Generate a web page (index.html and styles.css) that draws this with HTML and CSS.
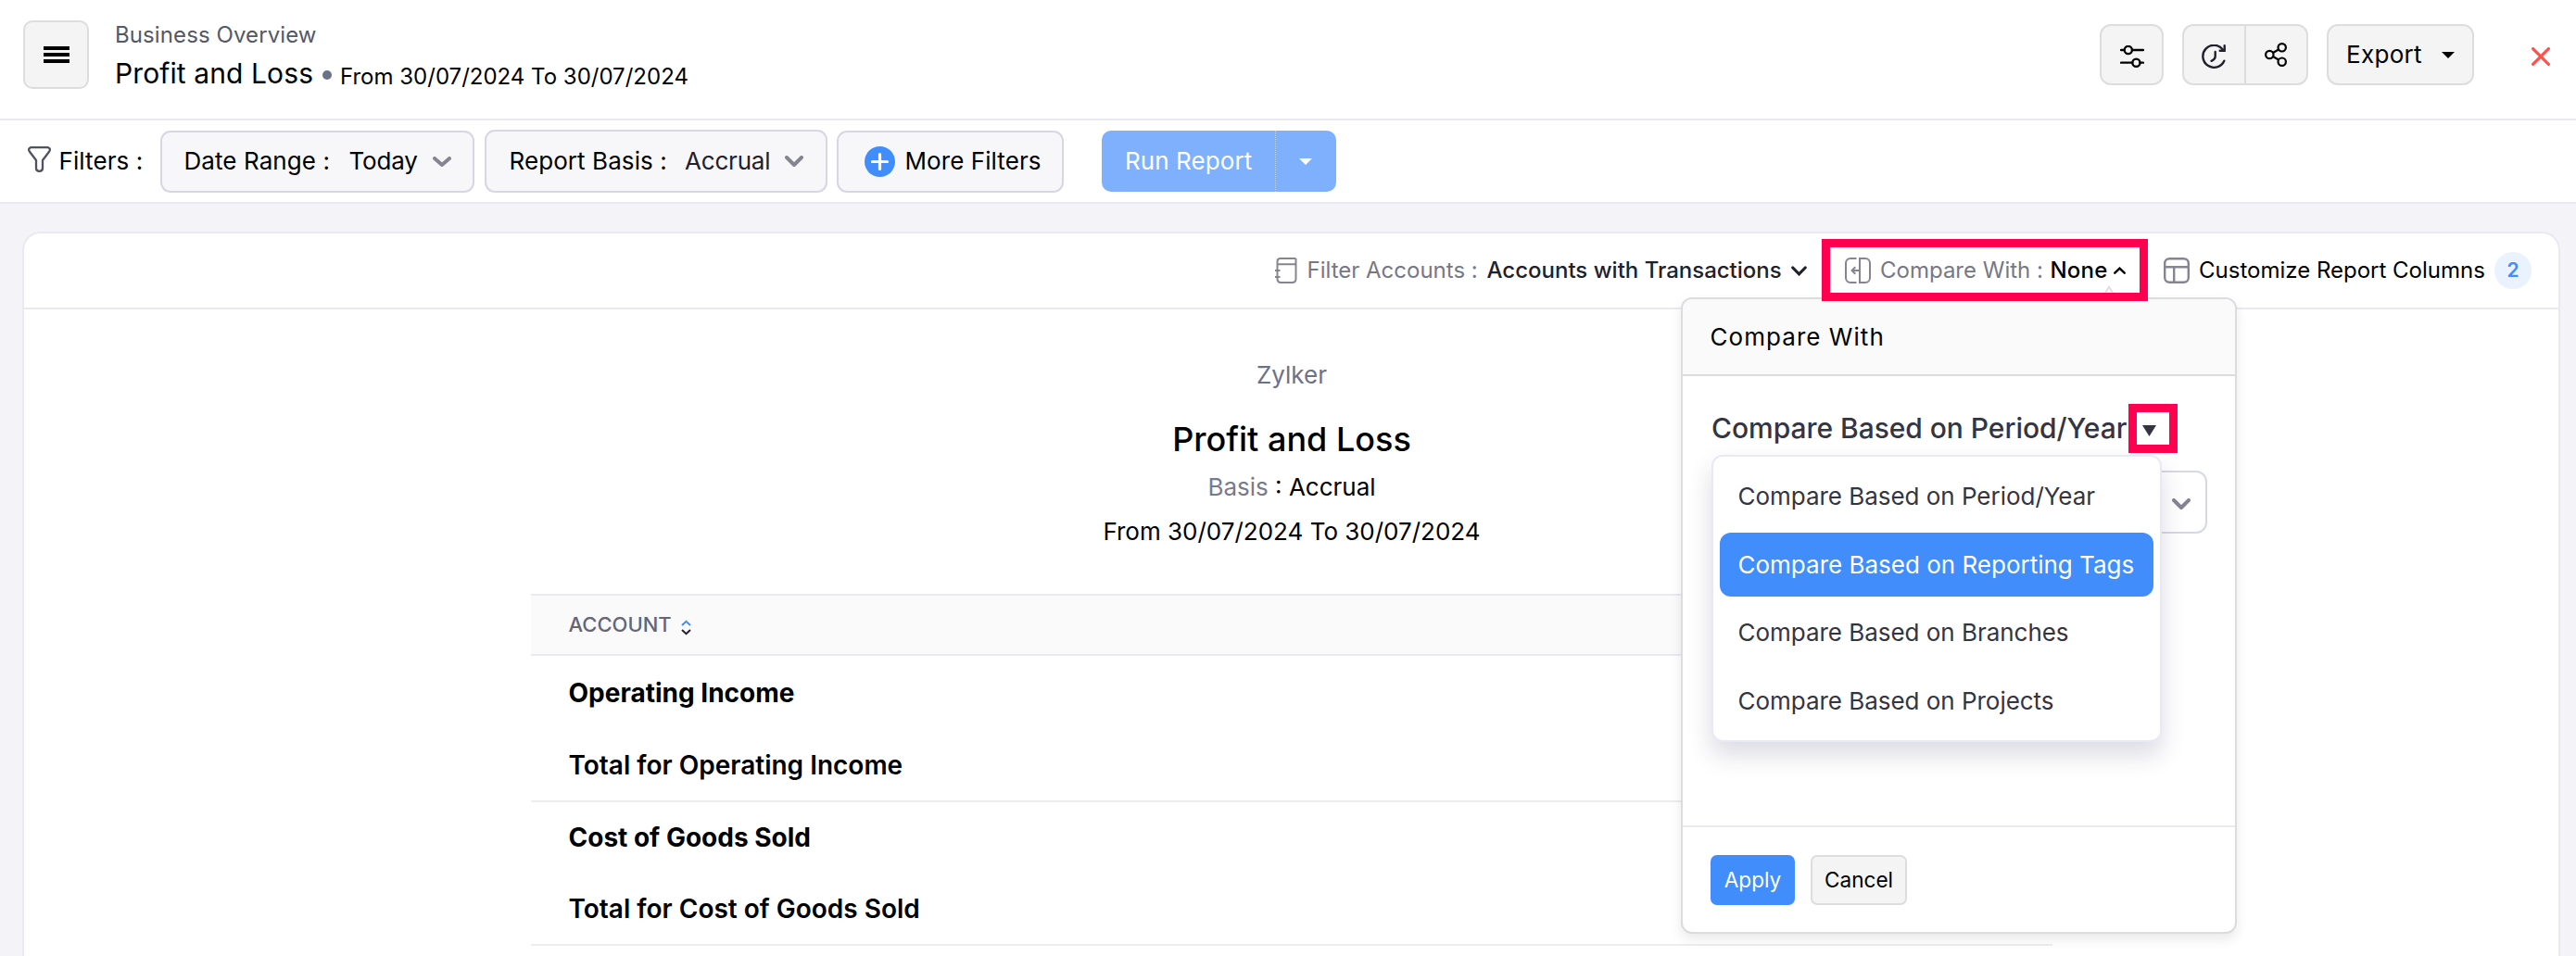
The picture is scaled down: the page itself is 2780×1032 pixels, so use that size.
FILE: index.html
```html
<!DOCTYPE html>
<html lang="en">
<head>
<meta charset="utf-8">
<title>Profit and Loss</title>
<link rel="stylesheet" href="styles.css">
</head>
<body>
<header class="topbar">
  <button class="btn menu-btn" aria-label="Menu">
    <svg width="28" height="18" viewBox="0 0 28 18"><path d="M0 2h28M0 9h28M0 16h28" stroke="#000" stroke-width="3.800" fill="none"/></svg>
  </button>
  <div class="heading">
    <div class="crumb">Business Overview</div>
    <div class="heading-row">
      <h1>Profit and Loss</h1><span class="dot"></span><span class="range">From 30/07/2024 To 30/07/2024</span>
    </div>
  </div>
  <div class="actions">
    <button class="btn icon-btn" aria-label="Settings">
      <svg width="26" height="24" viewBox="0 0 26 24" fill="none" stroke="#000" stroke-width="2.3" stroke-linecap="round"><path d="M1 5h3.7M13 5h12M1 18.7h12.3M21.5 18.7H25"/><circle cx="8.8" cy="5" r="4.1"/><circle cx="17.4" cy="18.7" r="4.1"/></svg>
    </button>
    <div class="btn btn-pair">
      <button class="pair-btn" aria-label="Schedule">
        <svg width="26" height="26" viewBox="0 0 26 26" fill="none" stroke="#20212d" stroke-width="2.4" stroke-linecap="round"><path d="M24.3 17.7A12 12 0 1 1 22.8 5.4"/><path d="M24.7 1.2v5.6h-5"/><path d="M14.7 8v4.6q0 3.6-4.2 5.2"/></svg>
      </button>
      <button class="pair-btn" aria-label="Share">
        <svg width="24" height="26" viewBox="0 0 24 26" fill="none" stroke="#000" stroke-width="2.2"><circle cx="5.3" cy="13" r="4.2"/><circle cx="18.7" cy="5.3" r="4.2"/><circle cx="18.7" cy="20.7" r="4.2"/><path d="M9 11l6-3.5M9 15l6 3.5"/></svg>
      </button>
    </div>
    <button class="btn export-btn">Export
      <svg width="14" height="7" viewBox="0 0 14 7"><path d="M0 0h14L7 7z"/></svg>
    </button>
    <svg class="close" width="20" height="20" viewBox="0 0 20 20"><path d="M1.6 1.6l16.8 16.8M18.4 1.6L1.6 18.4" stroke="#ff504c" stroke-width="3.200" stroke-linecap="round"/></svg>
  </div>
</header>

<section class="filters">
  <svg class="funnel" width="25" height="28" viewBox="0 0 25 28" fill="none" stroke="#50535f" stroke-width="2.300" stroke-linejoin="round"><path d="M3 1.200h19q3 1.300 1.200 4.300L16 15v8.500q0 3.300-3.500 3.300T9 23.500V15L1.800 5.500Q0 2.500 3 1.200z"/></svg>
  <span class="filters-label">Filters :</span>
  <div class="select date-range">
    <span class="label">Date Range :</span><span class="value">Today</span>
    <svg width="20" height="11" viewBox="0 0 20 11"><path d="M2 2l8 7 8-7" class="chev"/></svg>
  </div>
  <div class="select basis">
    <span class="label">Report Basis :</span><span class="value">Accrual</span>
    <svg width="20" height="12" viewBox="0 0 20 12"><path d="M2 2l8 8 8-8" class="chev"/></svg>
  </div>
  <div class="select more">
    <svg width="33" height="33" viewBox="0 0 33 33"><circle cx="16.500" cy="16.500" r="16.500" fill="#408dfb"/><path d="M16.500 8.500v16M8.500 16.500h16" stroke="#fff" stroke-width="3.200" stroke-linecap="round"/></svg>
    <span>More Filters</span>
  </div>
  <div class="run">
    <span class="run-main">Run Report</span>
    <span class="run-caret"><svg width="14" height="7" viewBox="0 0 14 7"><path d="M0 0h14L7 7z" fill="#fff"/></svg></span>
  </div>
</section>

<main class="card">
  <div class="toolbar">
    <div class="tool tool-accounts">
      <svg width="24" height="28" viewBox="0 0 24 28" fill="none" stroke="#858592" stroke-width="2"><path d="M22.500 1H6Q2.500 1 2.500 4v19q0 4 4 4h12q4 0 4-4V1M2.500 7.300h20M0 14h5.500M0 21h5.500"/></svg>
      <span class="muted">Filter Accounts :</span><strong>Accounts with Transactions</strong>
      <svg width="17" height="11" viewBox="0 0 17 11"><path d="M1.800 2l6.700 6.800L15.200 2" fill="none" stroke="#20212d" stroke-width="3.200" stroke-linecap="round"/></svg>
    </div>
    <div class="tool tool-compare">
      <svg width="28" height="28" viewBox="0 0 28 28" fill="none" stroke="#858592" stroke-width="2"><path d="M12.500 1H6a5 5 0 0 0-5 5v16a5 5 0 0 0 5 5h6.500M16 1h6a5 5 0 0 1 5 5v16a5 5 0 0 1-5 5h-6zM16 14H8M11.300 10.300L7.600 14l3.700 3.700"/></svg>
      <span class="muted">Compare With :</span><strong>None</strong>
      <svg width="13" height="8" viewBox="0 0 13 8"><path d="M1.300 6.700l5.200-5 5.200 5" fill="none" stroke="#000" stroke-width="2.400" stroke-linecap="round"/></svg>
    </div>
    <div class="tool tool-columns">
      <svg width="28" height="28" viewBox="0 0 28 28" fill="none" stroke="#858592" stroke-width="2.400"><rect x="1.200" y="1.200" width="25.600" height="25.600" rx="5"/><path d="M1 10.300h26M11.200 10.300V27"/></svg>
      <span>Customize Report Columns</span>
      <span class="badge">2</span>
    </div>
  </div>

  <div class="report">
    <div class="org">Zylker</div>
    <h2>Profit and Loss</h2>
    <div class="line"><span class="muted">Basis</span> : Accrual</div>
    <div class="line period">From 30/07/2024 To 30/07/2024</div>
    <div class="table">
      <div class="thead">ACCOUNT
        <svg width="11" height="17" viewBox="0 0 11 17" fill="none" stroke-width="2"><path d="M1 6l4.500-4.200L10 6" stroke="#408dfb"/><path d="M1 11l4.500 4.200L10 11" stroke="#20212d"/></svg>
      </div>
      <div class="group first">
        <div class="row group-name">Operating Income</div>
        <div class="row group-total">Total for Operating Income</div>
      </div>
      <div class="group">
        <div class="row group-name">Cost of Goods Sold</div>
        <div class="row group-total">Total for Cost of Goods Sold</div>
      </div>
    </div>
  </div>

  <svg class="pointer" width="16" height="13" viewBox="0 0 16 13"><path d="M1 13L8 1.500 15 13" fill="#fafafa" stroke="#dcdcdf" stroke-width="1.500"/></svg>
  <div class="popover">
    <div class="pop-head">Compare With</div>
    <div class="pop-body">
      <div class="pop-title">Compare Based on Period/Year
        <svg width="15" height="12" viewBox="0 0 15 12"><path d="M0 0h15L7.500 12z" fill="#333543"/></svg>
      </div>
      <div class="period-select"><svg width="20" height="12" viewBox="0 0 20 12"><path d="M2 2l8 8 8-8" class="chev"/></svg></div>
      <div class="options">
        <div class="option">Compare Based on Period/Year</div>
        <div class="option active">Compare Based on Reporting Tags</div>
        <div class="option">Compare Based on Branches</div>
        <div class="option">Compare Based on Projects</div>
      </div>
    </div>
    <div class="pop-foot">
      <button class="apply">Apply</button>
      <button class="cancel">Cancel</button>
    </div>
  </div>
  <div class="mark mark-compare"></div>
  <div class="mark mark-caret"></div>
</main>
</body>
</html>
```
FILE: styles.css
```css
* { box-sizing: border-box; }

body {
  margin: 0;
  height: 1032px;
  overflow: hidden;
  display: flex;
  flex-direction: column;
  background: #f3f3f8;
  color: #000;
  font: 26px/1.4 Inter, "Liberation Sans", sans-serif;
}

button { font: inherit; color: inherit; margin: 0; padding: 0; }
svg { display: block; flex: none; }
span, strong, div, h1, h2 { white-space: nowrap; }
.chev { fill: none; stroke: #858592; stroke-width: 4; stroke-linecap: round; stroke-linejoin: round; }
.muted { color: #6c718a; }

/* Top bar */
.topbar {
  flex: none;
  height: 130px;
  display: flex;
  align-items: flex-start;
  padding: 0 28px 0 25px;
  background: #fff;
  border-bottom: 2px solid #e9e9f1;
}
.btn {
  display: flex;
  align-items: center;
  justify-content: center;
  background: #f4f4f4;
  border: 2px solid #dddddf;
  border-radius: 12px;
}
.menu-btn { width: 71px; height: 74px; margin-top: 22px; border-radius: 10px; }
.heading { margin: 20px 0 0 28px; }
.crumb { font-size: 24px; line-height: 35px; letter-spacing: .1px; color: #545868; }
.heading-row { display: flex; align-items: center; height: 48px; }
h1 { margin: 0; width: 224px; font-size: 30px; font-weight: 400; line-height: 48px; letter-spacing: .1px; }
.dot { width: 10px; height: 10px; border-radius: 50%; background: #6c718a; margin-top: 3px; }
.range { margin: 8px 0 0 9px; font-size: 24px; line-height: 48px; }
.actions { margin: 26px 0 0 auto; display: flex; height: 66px; align-items: center; }
.icon-btn { width: 69px; height: 66px; margin-right: 20px; padding-top: 4px; }
.btn-pair { width: 136px; height: 66px; margin-right: 20px; overflow: hidden; }
.pair-btn {
  flex: 1;
  height: 62px;
  display: flex;
  align-items: center;
  justify-content: center;
  border: 0;
  background: none;
  padding: 4px 2px 0 0;
}
.pair-btn + .pair-btn { border-left: 2px solid #dddddf; padding-top: 0; }
.export-btn { width: 159px; height: 66px; margin-right: 62px; gap: 21px; letter-spacing: .3px; }
.close { margin-top: 4px; }

/* Filter bar */
.filters {
  flex: none;
  height: 90px;
  display: flex;
  align-items: center;
  padding-left: 29.500px;
  background: #fff;
  border-bottom: 2px solid #e9e9f1;
  letter-spacing: .08px;
}
.funnel { margin-top: -4px; }
.filters-label { width: 109.500px; margin-left: 9px; }
.select {
  height: 67px;
  display: flex;
  align-items: center;
  background: #f7f7fa;
  border: 2px solid #d7d7e4;
  border-radius: 11px;
}
.date-range { width: 339px; padding-left: 23.500px; margin-right: 11px; }
.date-range .label { width: 178px; }
.date-range .value { width: 90.500px; letter-spacing: -.2px; }
.basis { width: 370px; height: 68px; padding-left: 24.500px; margin-right: 10px; }
.basis .label { width: 189.500px; }
.basis .value { width: 108px; color: #20212d; letter-spacing: -.2px; }
.more { width: 244.500px; padding-left: 27.500px; gap: 11px; margin-right: 41px; }
.run {
  width: 253px;
  height: 66px;
  display: flex;
  align-items: center;
  border-radius: 10px;
  background: #7fb0fd;
  color: #fff;
}
.run-main { width: 188px; padding-left: 25.500px; line-height: 66px; border-right: 1px dotted #b3cff9; }
.run-caret { flex: 1; display: flex; justify-content: center; }

/* Report card */
.card {
  position: relative;
  flex: 1;
  min-height: 0;
  margin: 30px 17px 0 24px;
  background: #fff;
  border: 2px solid #e9e9f1;
  border-bottom: 0;
  border-radius: 20px 20px 0 0;
}
.toolbar {
  height: 82px;
  display: flex;
  justify-content: flex-end;
  align-items: center;
  padding: 0 29px 0 0;
  border-bottom: 2px solid #e9e9f1;
  font-size: 24px;
}
.tool { display: flex; align-items: center; }
.tool strong { font-weight: 500; }
.tool-accounts { width: 615.500px; }
.tool-accounts .muted { width: 194px; margin-left: 11px; color: #767887; }
.tool-accounts strong { width: 328px; color: #20212d; }
.tool-compare { width: 344px; }
.tool-compare .muted { width: 183.500px; margin-left: 10px; color: #767887; }
.tool-compare strong { width: 68px; letter-spacing: .2px; }
.tool-columns { width: 397px; }
.tool-columns span:nth-child(2) { width: 319px; margin-left: 10px; }
.badge {
  width: 40px;
  height: 40px;
  border-radius: 50%;
  background: #eaf2fe;
  color: #408dfb;
  font-size: 21px;
  font-weight: 600;
  line-height: 40px;
  text-align: center;
}

.report { padding: 51px 0 0 1px; display: flex; flex-direction: column; align-items: center; }
.org { line-height: 40px; color: #6c718a; }
h2 { margin: 24px 0 0; font-size: 36px; font-weight: 500; line-height: 50px; }
.line { margin-top: 7px; line-height: 40px; }
.period { margin-top: 8px; }
.line .muted { color: #777b8d; }
.table { width: 1642px; margin-top: 47px; }
.thead {
  height: 67px;
  display: flex;
  align-items: center;
  gap: 10px;
  padding-left: 40.500px;
  background: #fafafb;
  border: solid #e9e9f1;
  border-width: 2px 0;
  font-size: 22px;
  font-weight: 500;
  color: #666475;
}
.thead svg { margin-top: 5px; }
.group { border-bottom: 2px solid #ededf0; }
.row { padding-left: 40.500px; font-size: 28px; }
.group-name { font-weight: 700; line-height: 77px; }
.group-total { font-weight: 600; line-height: 76px; }
.first .group-name { line-height: 81px; }
.first .group-total { line-height: 75px; }

/* Compare popover */
.pointer { position: absolute; left: 2242px; top: 56px; }
.popover {
  position: absolute;
  left: 1788px;
  top: 69px;
  width: 600px;
  height: 687px;
  display: flex;
  flex-direction: column;
  background: #fff;
  border: 2px solid #dcdcdf;
  border-radius: 12px;
  box-shadow: 0 6px 14px rgba(0, 0, 0, .09);
}
.pop-head {
  height: 83px;
  padding-left: 29.500px;
  border-bottom: 2px solid #dcdcdf;
  border-radius: 10px 10px 0 0;
  background: #fafafa;
  line-height: 81px;
  letter-spacing: 1.05px;
}
.pop-body { position: relative; flex: 1; padding: 36px 0 0 31px; }
.pop-title {
  display: flex;
  align-items: center;
  gap: 17px;
  font-size: 30px;
  font-weight: 500;
  line-height: 40px;
  letter-spacing: -.04px;
  color: #333543;
}
.pop-title svg { margin-top: 5px; }
.period-select {
  width: 534.500px;
  height: 68px;
  margin-top: 26px;
  padding: 3px 16px 0 0;
  display: flex;
  align-items: center;
  justify-content: flex-end;
  border: 2px solid #d6d8e6;
  border-radius: 12px;
}
.options {
  position: absolute;
  left: 31px;
  top: 85px;
  width: 485.500px;
  height: 310px;
  display: flex;
  flex-direction: column;
  gap: 4.700px;
  padding: 8px 7px;
  background: #fff;
  border: 2px solid #e9e9f3;
  border-radius: 12px;
  box-shadow: 0 14px 26px rgba(40, 40, 90, .17);
}
.option { height: 69px; padding-left: 19.500px; border-radius: 12px; line-height: 69px; letter-spacing: -.03px; color: #333543; }
.option.active { background: #408dfb; color: #fff; letter-spacing: 0; }
.pop-foot {
  height: 115px;
  display: flex;
  gap: 17px;
  padding: 30px 0 0 30px;
  border-top: 2px solid #e9e9f1;
  font-size: 22.600px;
}
.apply { width: 91px; height: 54px; border: 0; border-radius: 7px; background: #408dfb; color: #fff; }
.cancel { width: 104px; height: 54px; border: 2px solid #dddddf; border-radius: 7px; background: #f4f4f4; }

/* Highlight frames over the compare controls */
.mark { position: absolute; border: 9px solid #ff0051; }
.mark-compare { left: 1940px; top: 6px; width: 352px; height: 67px; }
.mark-caret { left: 2271px; top: 184px; width: 52.500px; height: 53px; }
```
